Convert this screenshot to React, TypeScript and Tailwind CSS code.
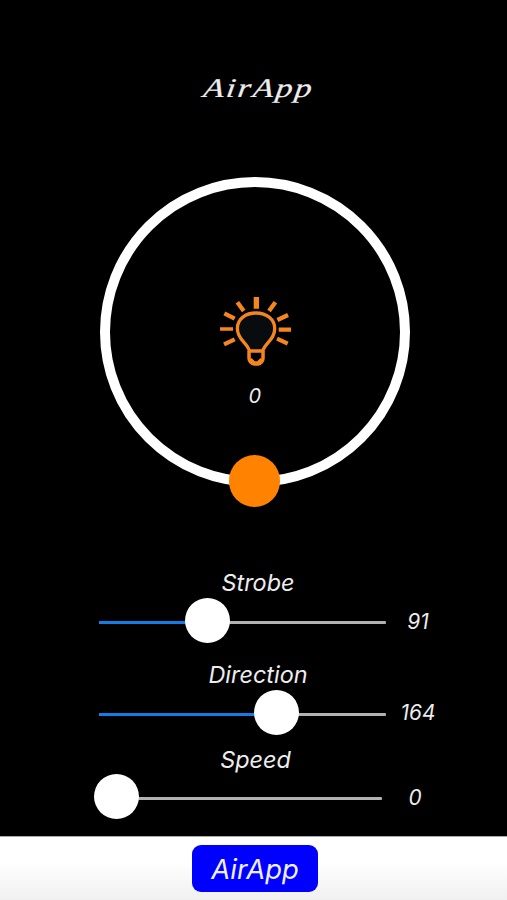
import React from 'react';

function Bulb() {
  return (
    <svg className="h-[78px] w-[80px] shrink-0" viewBox="50 40 240 234" fill="none" stroke="#f5861f">
      <path
        d="M148 214C143 190 112 180 112 147C112 117 137 100 168 100C200 100 224 119 224 147C224 180 195 190 188 214Z"
        fill="#080c0e"
        strokeWidth="10"
        strokeLinejoin="round"
      />
      <path d="M147 214V236C147 244 155 253 162 253H175C181 253 189 244 189 236V214" strokeWidth="10.5" />
      <path d="M152 238L163 249H173L184 238" strokeWidth="8" />
      <path d="M169 52V87" strokeWidth="16" />
      <path d="M112 68L131 94M226 68L207 94" strokeWidth="13" />
      <path d="M73 101L104 117M264 106L232 121M72 194L104 179M263 192L231 177" strokeWidth="12.5" />
      <path d="M60 148H99" strokeWidth="11" />
      <path d="M236 150H273" strokeWidth="13" />
    </svg>
  );
}

interface SliderProps {
  label: string;
  value: number;
  thumb: string;
  fill: string;
  track: string;
  labelShift: string;
  valueShift: string;
}

function SliderRow({ label, value, thumb, fill, track, labelShift, valueShift }: SliderProps) {
  return (
    <section className="flex flex-col">
      <h2 className={`ml-[98px] w-[320px] text-center text-[23.4px] font-normal leading-[30px] ${labelShift}`}>{label}</h2>
      <div className="flex h-[46px] items-center">
        <div className="relative ml-[98px] flex h-[46px] w-[288px] items-center">
          <div className={`mt-[2px] ml-[0.5px] flex h-[3px] overflow-hidden rounded-[1px] bg-[#b3b1b2] ${track}`}>
            <div className={`h-full bg-[#147ce5] ${fill}`} />
          </div>
          <div className={`absolute top-0 size-[45px] rounded-full bg-white ${thumb}`} />
        </div>
        <span className={`w-[64px] text-center text-[20.8px] leading-[24px] ${valueShift}`}>{value}</span>
      </div>
    </section>
  );
}

export default function App() {
  return (
    <main className="flex h-[900px] w-[507px] flex-col overflow-hidden bg-black font-['Inter',sans-serif] italic text-[#ededed]">
      <header className="flex h-[177px] justify-center pt-[71px]">
        <h1 className="h-[34px] scale-x-[1.26] -skew-x-6 pl-[8px] font-['Liberation_Serif',serif] text-[27px] leading-[34px] tracking-[1.6px] [-webkit-text-stroke:0.2px_#ededed]">AirApp</h1>
      </header>
      <div className="relative ml-[99.7px] flex size-[310px] flex-col items-center rounded-full border-[10px] border-white pt-[106px]">
        <div className="translate-x-[1.7px]"><Bulb /></div>
        <span className="mt-[13px] text-[20px] leading-[24px]">0</span>
        <div className="absolute -bottom-[30px] left-[119px] h-[52px] w-[51px] rounded-full bg-[#ff8300]" />
      </div>
      <div className="flex h-[349px] flex-col pt-[81px]">
        <SliderRow label="Strobe" value={91} thumb="left-[86.8px]" fill="w-[109px]" track="w-[287.5px]" labelShift="" valueShift="translate-y-[0.5px]" />
        <div className="h-[16px]" />
        <SliderRow label="Direction" value={164} thumb="left-[155.5px]" fill="w-[178px]" track="w-[287.5px]" labelShift="" valueShift="" />
        <div className="h-[8px]" />
        <SliderRow label="Speed" value={0} thumb="-left-[4px]" fill="w-0" track="w-[283.5px]" labelShift="-translate-x-[2.5px] translate-y-[0.5px]" valueShift="-translate-x-[3px] translate-y-[0.5px]" />
      </div>
      <footer className="flex h-[64px] justify-center border-t border-[#aaa] bg-gradient-to-b from-white from-40% to-[#f0f0f0] pt-[8px] pl-[3px]">
        <button className="flex h-[47px] w-[126px] items-center justify-center rounded-[9px] bg-[#0000fe] pt-px text-[27.4px] italic leading-[32px] text-[#f0f0ff]">AirApp</button>
      </footer>
    </main>
  );
}
